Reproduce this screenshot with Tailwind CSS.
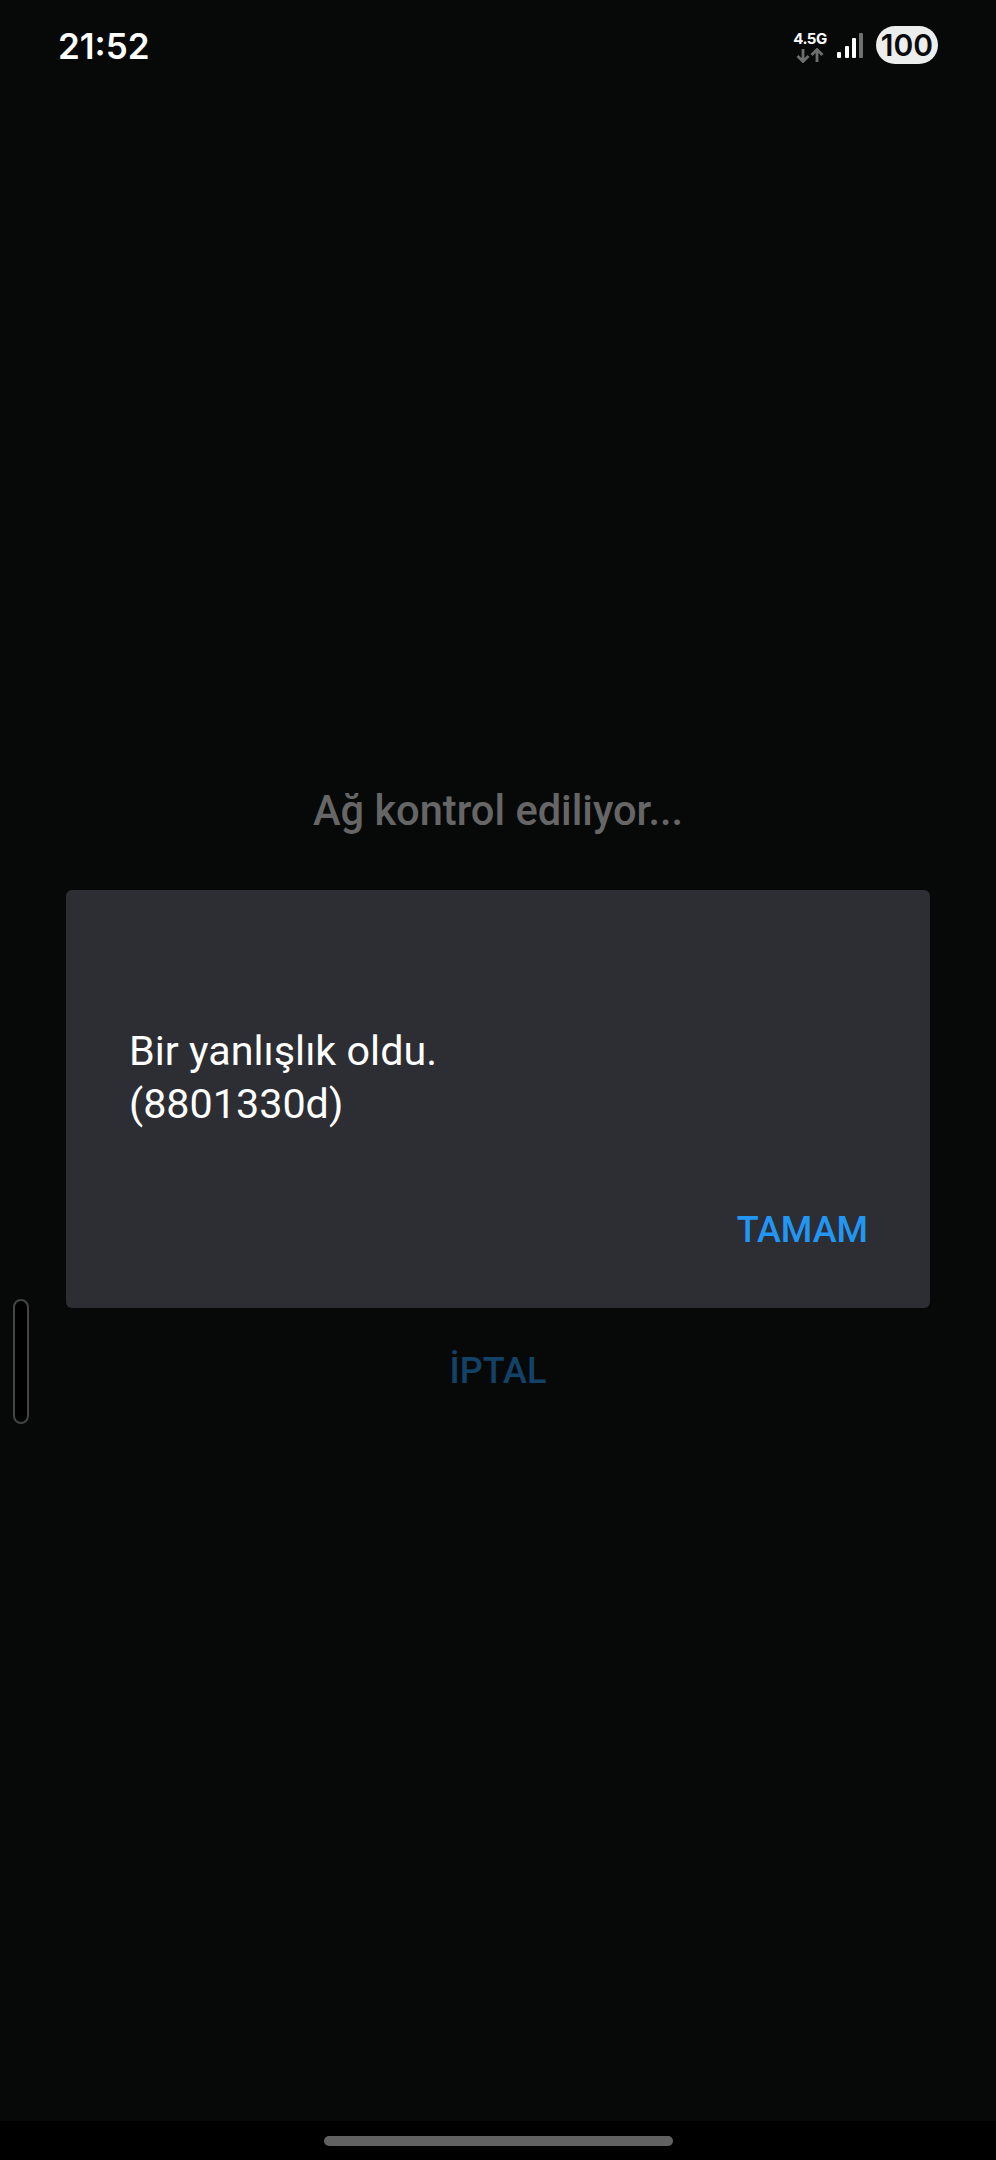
<!DOCTYPE html>
<html lang="tr">
<head>
    <meta charset="UTF-8">
    <meta name="viewport" content="width=device-width, initial-scale=1.0">
    <title>Ağ kontrol ediliyor</title>
    <script src="https://cdn.jsdelivr.net/npm/@tailwindcss/browser@4"></script>
</head>
<body class="bg-black font-['Roboto',sans-serif] text-white">
    <div class="relative flex flex-col w-[996px] h-[2160px] overflow-hidden">
        <main class="flex flex-col flex-1 bg-[#070909]">
            <!-- Status bar -->
            <header class="flex items-start justify-between h-[786px] pl-[58px] pr-[58px]">
                <span class="mt-[24px] font-['Inter',sans-serif] text-[35px] leading-[44px] font-semibold">21:52</span>
                <div class="flex items-start mt-[26px]">
                    <div class="flex flex-col items-center w-[34px] mt-[6px]">
                        <span class="font-['Inter',sans-serif] text-[15px] leading-[14px] font-bold tracking-[-0.5px]">4.5G</span>
                        <svg class="mt-[2px]" width="30" height="15" viewBox="0 0 30 15" fill="none" stroke="#6e6e6e" stroke-width="2.8">
                            <path d="M8 1v12M2.5 8l5.5 5.5L13.5 8"/>
                            <path d="M22 14V2M16.5 7L22 1.5 27.5 7"/>
                        </svg>
                    </div>
                    <svg class="ml-[10px] mt-[7px]" width="26" height="25" viewBox="0 0 26 25">
                        <rect x="0" y="19" width="4" height="6" rx="1" fill="#fff"/>
                        <rect x="8" y="13" width="4" height="12" rx="1" fill="#fff"/>
                        <rect x="15" y="5" width="4" height="20" rx="1" fill="#fff"/>
                        <rect x="22" y="0" width="4" height="25" rx="1" fill="#6f6f6f"/>
                    </svg>
                    <div class="flex items-center justify-center w-[62px] h-[38px] ml-[13px] rounded-full bg-[#eceeee] font-['Inter',sans-serif] text-[30px] leading-none font-semibold text-[#0a0a0a]">100</div>
                </div>
            </header>

            <h1 class="h-[48px] text-center text-[41.6px] leading-[50px] font-medium text-[#666666]">Ağ kontrol ediliyor...</h1>

            <!-- Dialog -->
            <section class="flex flex-col w-[864px] h-[418px] mx-auto mt-[56px] rounded-[6px] bg-[#2d2e33] pt-[135px] pb-[56px] pl-[63px] pr-[62px]">
                <p class="text-[41.3px] leading-[53px]">Bir yanlışlık oldu.<br>(8801330d)</p>
                <div class="flex justify-end mt-auto">
                    <button class="text-[36px] leading-[44px] font-medium text-[#2196f3]">TAMAM</button>
                </div>
            </section>

            <button class="mx-auto mt-[41px] text-[36px] leading-[44px] font-medium text-[#134268]">İPTAL</button>
        </main>

        <!-- Navigation bar -->
        <footer class="flex justify-center h-[39px] pt-[15px] bg-black">
            <div class="w-[349px] h-[10px] rounded-full bg-[#616161]"></div>
        </footer>

        <!-- Edge handle -->
        <div class="absolute left-[13px] top-[1299px] w-[16px] h-[125px] rounded-full border-2 border-[#444444] bg-black"></div>
    </div>
</body>
</html>
